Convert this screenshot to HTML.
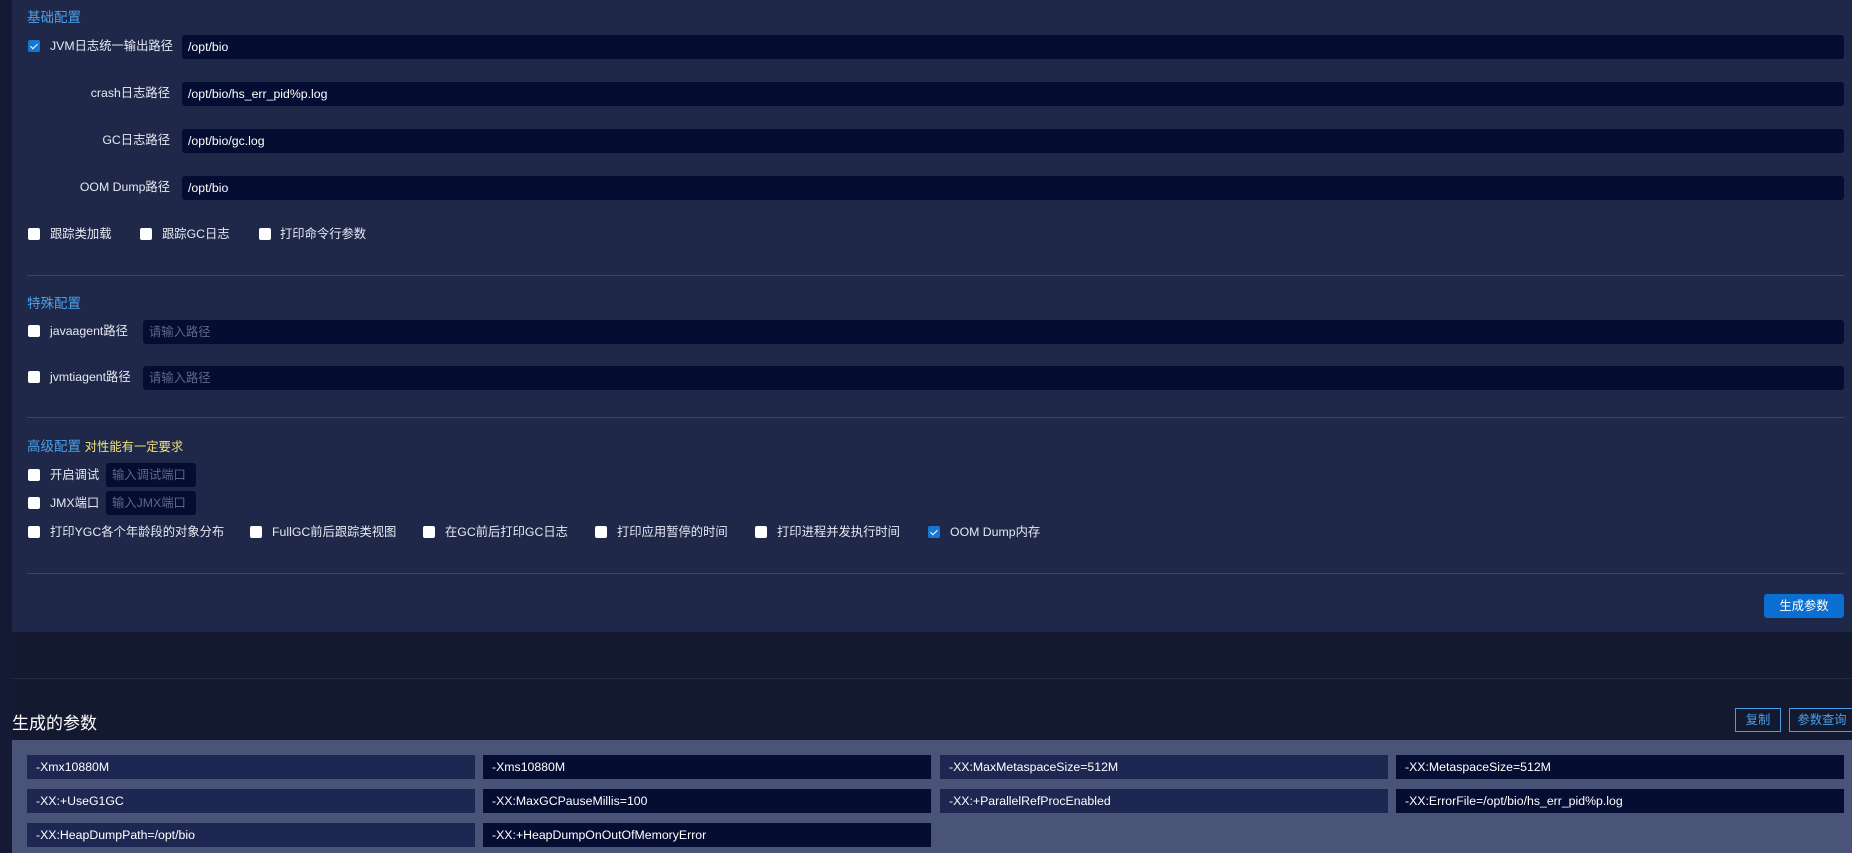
<!DOCTYPE html>
<html><head><meta charset="utf-8"><style>
*{box-sizing:border-box;margin:0;padding:0}
body{width:1852px;height:853px;background:#131a30;font-family:"Liberation Sans","Noto Sans CJK SC",sans-serif;font-size:12.3px;color:#e6e9f2;position:relative;overflow:hidden}
.a{position:absolute}
.strip{left:0;top:0;width:12px;height:853px;background:#141a33}
.panel{left:12px;top:0;width:1840px;height:632px;background:#1f2849}
.h{color:#4a9ee8;font-size:13.5px}
.cb{position:absolute;width:12px;height:12px;background:#fff;border-radius:2px}
.cb.on{background:#1677d2}
.cb.on::after{content:"";position:absolute;left:4px;top:1.5px;width:3px;height:6px;border:solid #fff;border-width:0 1.5px 1.5px 0;transform:rotate(45deg)}
.lbl{position:absolute;white-space:nowrap;line-height:16px}
.inp{position:absolute;background:#050d33;border-radius:3px;height:24px;line-height:24px;padding-left:6px;color:#fff;white-space:nowrap}
.ph{color:#5f6787}
.hr{position:absolute;left:27px;width:1817px;height:1px;background:#3a4466}
.btn{position:absolute;border:1px solid #4a9ee8;color:#4a9ee8;height:24px;line-height:22px;text-align:center}
.pv{position:absolute;height:24px;line-height:24px;padding-left:9px;background:#050d33;color:#fff;width:448px;white-space:nowrap}
</style></head><body>
<div class="a strip"></div>
<div class="a panel"></div>
<div class="a h" style="left:27px;top:6px">基础配置</div>
<div class="cb on" style="left:28px;top:40px"></div>
<div class="lbl" style="left:50px;top:38px">JVM日志统一输出路径</div>
<div class="inp" style="left:182px;top:35px;width:1662px">/opt/bio</div>
<div class="lbl" style="left:0;width:170px;text-align:right;top:85px">crash日志路径</div>
<div class="inp" style="left:182px;top:82px;width:1662px">/opt/bio/hs_err_pid%p.log</div>
<div class="lbl" style="left:0;width:170px;text-align:right;top:132px">GC日志路径</div>
<div class="inp" style="left:182px;top:129px;width:1662px">/opt/bio/gc.log</div>
<div class="lbl" style="left:0;width:170px;text-align:right;top:179px">OOM Dump路径</div>
<div class="inp" style="left:182px;top:176px;width:1662px">/opt/bio</div>
<div class="cb" style="left:28px;top:228px"></div><div class="lbl" style="left:50px;top:226px">跟踪类加载</div>
<div class="cb" style="left:140px;top:228px"></div><div class="lbl" style="left:162px;top:226px">跟踪GC日志</div>
<div class="cb" style="left:259px;top:228px"></div><div class="lbl" style="left:280px;top:226px">打印命令行参数</div>
<div class="hr" style="top:275px"></div>
<div class="a h" style="left:27px;top:292px">特殊配置</div>
<div class="cb" style="left:28px;top:325px"></div><div class="lbl" style="left:50px;top:323px">javaagent路径</div>
<div class="inp" style="left:143px;top:320px;width:1701px"><span class="ph">请输入路径</span></div>
<div class="cb" style="left:28px;top:371px"></div><div class="lbl" style="left:50px;top:369px">jvmtiagent路径</div>
<div class="inp" style="left:143px;top:366px;width:1701px"><span class="ph">请输入路径</span></div>
<div class="hr" style="top:417px"></div>
<div class="a h" style="left:27px;top:435px">高级配置 <span style="color:#f2e27a;font-size:12.3px">对性能有一定要求</span></div>
<div class="cb" style="left:28px;top:469px"></div><div class="lbl" style="left:50px;top:467px">开启调试</div>
<div class="inp" style="left:106px;top:463px;width:90px"><span class="ph">输入调试端口</span></div>
<div class="cb" style="left:28px;top:497px"></div><div class="lbl" style="left:50px;top:495px">JMX端口</div>
<div class="inp" style="left:106px;top:491px;width:90px"><span class="ph">输入JMX端口</span></div>
<div class="cb" style="left:28px;top:526px"></div><div class="lbl" style="left:50px;top:524px">打印YGC各个年龄段的对象分布</div>
<div class="cb" style="left:250px;top:526px"></div><div class="lbl" style="left:272px;top:524px">FullGC前后跟踪类视图</div>
<div class="cb" style="left:423px;top:526px"></div><div class="lbl" style="left:445px;top:524px">在GC前后打印GC日志</div>
<div class="cb" style="left:595px;top:526px"></div><div class="lbl" style="left:617px;top:524px">打印应用暂停的时间</div>
<div class="cb" style="left:755px;top:526px"></div><div class="lbl" style="left:777px;top:524px">打印进程并发执行时间</div>
<div class="cb on" style="left:928px;top:526px"></div><div class="lbl" style="left:950px;top:524px">OOM Dump内存</div>
<div class="hr" style="top:573px"></div>
<div class="a" style="left:1764px;top:594px;width:80px;height:24px;background:#0a6fd1;border-radius:3px;color:#fff;text-align:center;line-height:24px">生成参数</div>
<div class="a" style="left:12px;top:678px;width:1840px;height:1px;background:#222b45"></div>
<div class="a" style="left:12px;top:709px;font-size:17px;color:#fff">生成的参数</div>
<div class="btn" style="left:1735px;top:708px;width:46px">复制</div>
<div class="btn" style="left:1789px;top:708px;width:66px">参数查询</div>
<div class="a" style="left:12px;top:740px;width:1840px;height:113px;background:#4a5478"></div>
<div class="pv" style="left:27px;top:755px;background:#1d2752">-Xmx10880M</div>
<div class="pv" style="left:483px;top:755px">-Xms10880M</div>
<div class="pv" style="left:940px;top:755px;background:#1d2752">-XX:MaxMetaspaceSize=512M</div>
<div class="pv" style="left:1396px;top:755px">-XX:MetaspaceSize=512M</div>
<div class="pv" style="left:27px;top:789px;background:#1d2752">-XX:+UseG1GC</div>
<div class="pv" style="left:483px;top:789px">-XX:MaxGCPauseMillis=100</div>
<div class="pv" style="left:940px;top:789px;background:#1d2752">-XX:+ParallelRefProcEnabled</div>
<div class="pv" style="left:1396px;top:789px">-XX:ErrorFile=/opt/bio/hs_err_pid%p.log</div>
<div class="pv" style="left:27px;top:823px;background:#1d2752">-XX:HeapDumpPath=/opt/bio</div>
<div class="pv" style="left:483px;top:823px">-XX:+HeapDumpOnOutOfMemoryError</div>
</body></html>
